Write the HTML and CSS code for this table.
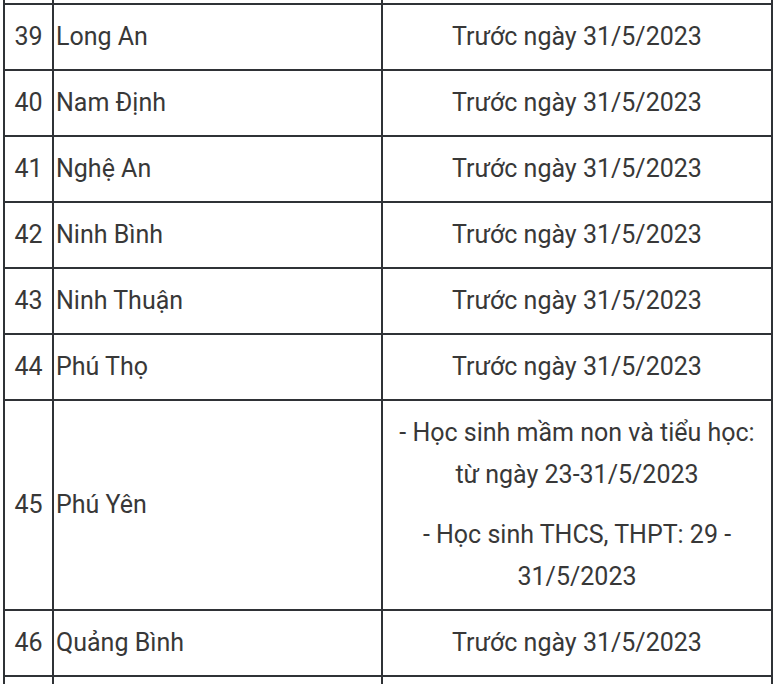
FILE: index.html
```html
<!DOCTYPE html>
<html lang="vi">
<head>
<meta charset="utf-8">
<title>Bảng thời gian</title>
<link rel="stylesheet" href="styles.css">
</head>
<body>
<div class="wrap">
<table class="tbl">
<colgroup><col class="c1"><col class="c2"><col class="c3"></colgroup>
<tbody>
<tr class="stub top"><td></td><td></td><td></td></tr>
<tr><td class="num">39</td><td class="name">Long An</td><td class="date">Trước ngày 31/5/2023</td></tr>
<tr><td class="num">40</td><td class="name">Nam Định</td><td class="date">Trước ngày 31/5/2023</td></tr>
<tr><td class="num">41</td><td class="name">Nghệ An</td><td class="date">Trước ngày 31/5/2023</td></tr>
<tr><td class="num">42</td><td class="name">Ninh Bình</td><td class="date">Trước ngày 31/5/2023</td></tr>
<tr><td class="num">43</td><td class="name">Ninh Thuận</td><td class="date">Trước ngày 31/5/2023</td></tr>
<tr><td class="num">44</td><td class="name">Phú Thọ</td><td class="date">Trước ngày 31/5/2023</td></tr>
<tr><td class="num">45</td><td class="name">Phú Yên</td><td class="date multi"><p>- Học sinh mầm non và tiểu học: từ ngày 23-31/5/2023</p><p>- Học sinh THCS, THPT: 29 - 31/5/2023</p></td></tr>
<tr><td class="num">46</td><td class="name">Quảng Bình</td><td class="date">Trước ngày 31/5/2023</td></tr>
<tr class="stub bottom"><td></td><td></td><td></td></tr>
</tbody>
</table>
</div>
</body>
</html>
```
FILE: styles.css
```css
html, body {
  margin: 0;
  padding: 0;
  background: #fff;
}
.wrap {
  padding-left: 3px;
  height: 684px;
  overflow: hidden;
}
.tbl {
  border-collapse: collapse;
  table-layout: fixed;
  width: 768px;
  font-family: Roboto, "Noto Sans", sans-serif;
  font-size: 25px;
  color: #383838;
}
.c1 { width: 49px; }
.c2 { width: 329px; }
.c3 { width: 390px; }
.tbl td {
  border: 2px solid #2f3236;
  padding: 11px 2px;
  line-height: 42px;
  vertical-align: middle;
}
.tbl .stub td {
  padding: 0;
  line-height: 0;
}
.tbl .stub.top td {
  border-top: 0;
  height: 3px;
}
.tbl .stub.bottom td {
  height: 30px;
}
.num { text-align: center; }
.name { text-align: left; }
.date { text-align: center; }
.multi { padding-left: 10px; padding-right: 10px; }
.multi p { margin: 0; }
.multi p + p { margin-top: 18px; }
```
